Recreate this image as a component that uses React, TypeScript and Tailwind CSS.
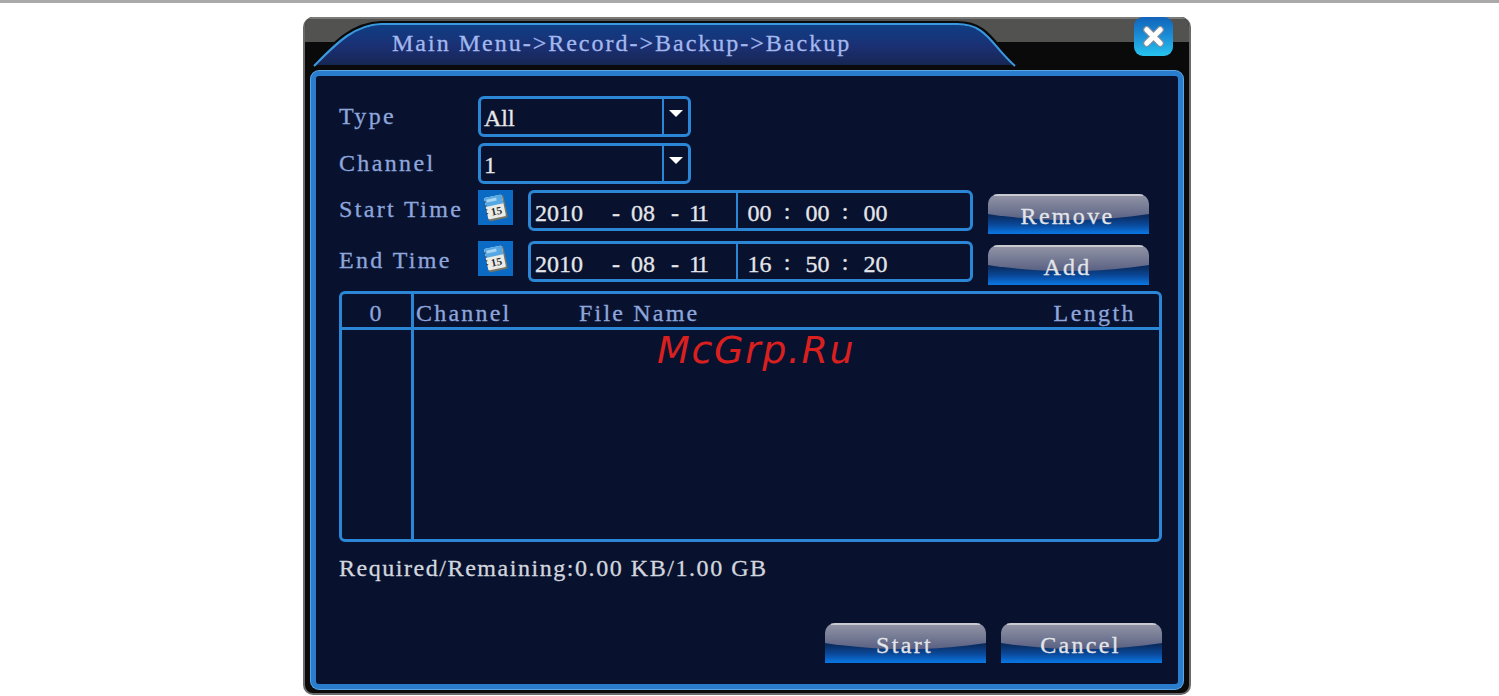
import React from 'react';

const SERIF = "font-['Liberation_Serif',serif] [-webkit-text-stroke:0.3px_currentColor]";

function GlossButton({ label, className = '' }: { label: string; className?: string }) {
  return (
    <button className={`relative block h-10 overflow-hidden rounded-t-[10px] bg-[linear-gradient(to_bottom,#0a2c60_55%,#0a4a9c_78%,#0a78e6_100%)] ${className}`}>
      <span className="absolute -left-1/2 -top-[64px] h-[90px] w-[200%] rounded-b-[50%] bg-[linear-gradient(to_top,#596082_0,#757a94_12px,#9496a6_26px)]" />
      <span className="absolute inset-x-[6px] top-0 h-[2px] bg-[#c8cad0]" />
      <span className={`relative block pr-[2px] pt-[3px] text-center text-[24px] leading-[38px] tracking-[2.3px] text-[#e2e5ea] ${SERIF}`}>{label}</span>
    </button>
  );
}

function Select({ value }: { value: string }) {
  return (
    <div className="flex h-[41px] w-[213px] rounded-[6px] border-[3px] border-[#2b86d6]">
      <span className={`flex-1 pl-[3px] text-[24px] leading-[38px] text-[#e8e8e8] ${SERIF}`}>{value}</span>
      <span className="flex w-[26px] justify-center border-l-2 border-[#2b86d6] pt-[11px]">
        <span className="h-0 w-0 border-x-[7px] border-t-[7px] border-x-transparent border-t-white" />
      </span>
    </div>
  );
}

function CalendarIcon() {
  return (
    <div className="h-[35px] w-[35px] bg-[#0a6ac4]">
      <svg viewBox="0 0 35 35" className="h-full w-full">
        <g transform="rotate(-12 17 17)">
          <rect x="8.5" y="7" width="19" height="23" rx="1.5" fill="#77746a" />
          <rect x="8" y="6" width="18" height="22" rx="1.5" fill="#ecece6" />
          <path d="M8 15V7.5A1.5 1.5 0 0 1 9.5 6h15A1.5 1.5 0 0 1 26 7.5V15Z" fill="#56a8e4" />
          <path d="M10 8H20V11H10Z" fill="#a6d4f2" />
          <path d="M7 10H9M7 14H9M7 18H9M7 22H9" stroke="#3a3a3a" strokeWidth="1" />
          <text x="17.5" y="25" textAnchor="middle" fontSize="11" fontWeight="700" fill="#2a2c33" fontFamily="Liberation Serif, serif">15</text>
        </g>
      </svg>
    </div>
  );
}

function DateField({ time }: { time: string[] }) {
  const cell = `text-center text-[24px] leading-[38px] text-[#e4e6ea] ${SERIF}`;
  return (
    <div className="flex h-[41px] w-[445px] rounded-[6px] border-[3px] border-[#2b86d6] pt-[1px]">
      <div className="flex w-[205px] pl-[4px]">
        <span className={`w-[48px] ${cell}`}>2010</span>
        <span className={`ml-[29px] w-[8px] ${cell}`}>-</span>
        <span className={`ml-[11px] w-[24px] ${cell}`}>08</span>
        <span className={`ml-[16px] w-[8px] ${cell}`}>-</span>
        <span className={`ml-[10px] w-[15px] text-left tracking-[-3px] ${cell}`}>11</span>
      </div>
      <div className="-mt-[1px] flex border-l-2 border-[#2b86d6] pt-[1px] pl-[9px]">
        <span className={`w-[25px] ${cell}`}>{time[0]}</span>
        <span className={`-mt-[2px] ml-[11px] w-[8px] ${cell}`}>:</span>
        <span className={`ml-[14px] w-[25px] ${cell}`}>{time[1]}</span>
        <span className={`-mt-[2px] ml-[11px] w-[8px] ${cell}`}>:</span>
        <span className={`ml-[14px] w-[25px] ${cell}`}>{time[2]}</span>
      </div>
    </div>
  );
}

const LABEL = `w-[139px] -translate-y-px text-[24px] leading-[30px] tracking-[2.35px] text-[#8ea6dc] ${SERIF}`;
const HEAD = `text-[24px] leading-[38px] tracking-[2.2px] text-[#8ea6dc] ${SERIF}`;

export default function App() {
  return (
    <div className="relative h-[696px] w-full overflow-hidden bg-white">
      <div className="h-[3px] bg-[#a9a9a9]" />
      <div className="relative ml-[303px] mt-[14px] h-[678px] w-[888px] overflow-hidden rounded-[10px] border-x-2 border-b-2 border-[#6a6a6a] bg-[#0a0a0a]">
        {/* title bar */}
        <div className="relative h-[51px]">
          <div className="h-[25px] border-t-2 border-[#7a7a78] bg-[#525350]" />
          <svg viewBox="0 0 888 51" className="absolute left-[-2px] top-0 h-[51px] w-[888px]">
            <defs>
              <linearGradient id="tabFill" x1="0" y1="0" x2="0" y2="1">
                <stop offset="0" stopColor="#0e3f86" />
                <stop offset="0.55" stopColor="#1b2f72" />
                <stop offset="1" stopColor="#16264f" />
              </linearGradient>
            </defs>
            <path d="M9 50 C30 28 48 7 78 6 H654 C686 6 690 28 714 50 Z" fill="url(#tabFill)" stroke="#0a0a0a" strokeWidth="4" />
            <path d="M11 49 C32 28 50 8 78 7 H654 C684 7 688 28 712 49" fill="none" stroke="#3a98e0" strokeWidth="2.2" />
          </svg>
          <span className={`absolute left-[87px] top-[10px] text-[24px] leading-[32px] tracking-[2px] text-[#a3b9ee] ${SERIF}`}>
            Main Menu-&gt;Record-&gt;Backup-&gt;Backup
          </span>
          <div className="absolute left-[829px] top-0 flex h-[39px] w-[39px] items-center justify-center rounded-[9px] bg-gradient-to-b from-[#1264ba] via-[#1c8ed8] to-[#28c4ee]">
            <svg viewBox="0 0 24 24" className="h-[27px] w-[27px]">
              <path d="M6 6 18 18M18 6 6 18" stroke="#8a8f96" strokeWidth="6.5" strokeLinecap="round" />
              <path d="M6 6 18 18M18 6 6 18" stroke="#ffffff" strokeWidth="4.5" strokeLinecap="round" />
            </svg>
          </div>
        </div>

        {/* main panel */}
        <div className="mx-[6px] mt-[3px] h-[618px] rounded-[8px] border-[5px] border-[#2a7ccc] bg-[#08122f] px-[23px] pt-[20px] shadow-[0_0_0_1px_#5ba6e4]">
          <div className="flex items-center">
            <span className={LABEL}>Type</span>
            <Select value="All" />
          </div>
          <div className="mt-[6px] flex items-center">
            <span className={LABEL}>Channel</span>
            <Select value="1" />
          </div>
          <div className="mt-[6px] flex items-start">
            <span className={`${LABEL} pt-[5px]`}>Start Time</span>
            <CalendarIcon />
            <div className="ml-[15px]"><DateField time={['00', '00', '00']} /></div>
            <GlossButton label="Remove" className="ml-[15px] mt-[4px] w-[161px]" />
          </div>
          <div className="mt-[7px] flex items-start">
            <span className={`${LABEL} pt-[5px]`}>End Time</span>
            <CalendarIcon />
            <div className="ml-[15px]"><DateField time={['16', '50', '20']} /></div>
            <GlossButton label="Add" className="ml-[15px] mt-[4px] w-[161px]" />
          </div>

          <div className="mt-[6px] flex h-[251px] w-[823px] rounded-[6px] border-[3px] border-[#2b86d6]">
            <div className="w-[72px] border-r-[3px] border-[#2b86d6]">
              <div className={`h-[36px] border-b-[3px] border-[#2b86d6] text-center ${HEAD}`}>0</div>
            </div>
            <div className="flex-1">
              <div className={`flex h-[36px] border-b-[3px] border-[#2b86d6] pl-[2px] pr-[23px] ${HEAD}`}>
                <span className="w-[163px]">Channel</span>
                <span>File Name</span>
                <span className="ml-auto tracking-[2.4px]">Length</span>
              </div>
            </div>
          </div>

          <div className={`mt-[10px] text-[24px] leading-[32px] tracking-[1.55px] text-[#d2d6de] ${SERIF}`}>
            Required/Remaining:0.00 KB/1.00 GB
          </div>

          <div className="mt-[39px] flex w-[823px] justify-end gap-[15px]">
            <GlossButton label="Start" className="w-[161px]" />
            <GlossButton label="Cancel" className="w-[161px]" />
          </div>
        </div>
      </div>

      {/* watermark */}
      <span className="absolute left-[657px] top-[328px] text-[38px] italic leading-[44px] tracking-[1.6px] text-[#d9201f] font-['DejaVu_Sans',sans-serif]">
        McGrp.Ru
      </span>
    </div>
  );
}
